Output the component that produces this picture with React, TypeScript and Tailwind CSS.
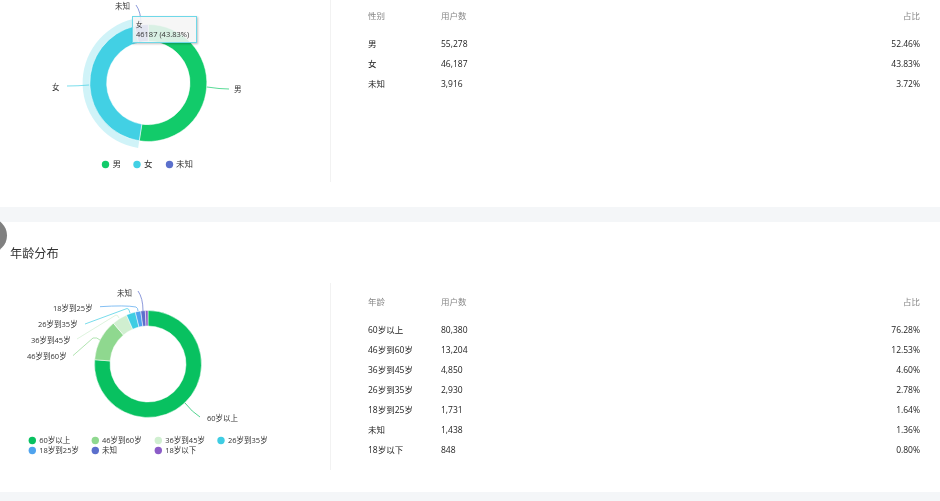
const FONT = "font-['Open_Sans','Noto_Sans_CJK_SC',sans-serif]";

function pt(cx: number, cy: number, r: number, deg: number): [number, number] {
  const a = ((deg - 90) * Math.PI) / 180;
  return [cx + r * Math.cos(a), cy + r * Math.sin(a)];
}
function arc(cx: number, cy: number, r0: number, r1: number, a0: number, a1: number) {
  const [x0, y0] = pt(cx, cy, r1, a0);
  const [x1, y1] = pt(cx, cy, r1, a1);
  const [x2, y2] = pt(cx, cy, r0, a1);
  const [x3, y3] = pt(cx, cy, r0, a0);
  const large = a1 - a0 > 180 ? 1 : 0;
  return `M${x0} ${y0}A${r1} ${r1} 0 ${large} 1 ${x1} ${y1}L${x2} ${y2}A${r0} ${r0} 0 ${large} 0 ${x3} ${y3}Z`;
}

type Seg = { c: string; a0: number; a1: number };
function Donut({ cx, cy, r0, r1, segs }: { cx: number; cy: number; r0: number; r1: number; segs: Seg[] }) {
  return (
    <>
      {segs.map((s, i) => (
        <path key={i} d={arc(cx, cy, r0, r1, s.a0, s.a1)} fill={s.c} stroke="#fff" strokeWidth={0.5} />
      ))}
    </>
  );
}

function Label({ x, y, t }: { x: number; y: number; t: string }) {
  return (
    <text x={x} y={y} fontSize={7.5} fill="#333" dominantBaseline="middle">
      {t}
    </text>
  );
}
function Lead({ d, c }: { d: string; c: string }) {
  return <path d={d} fill="none" stroke={c} strokeWidth={0.7} />;
}
function Dot({ x, y, c, t, tx, fs = 7.5 }: { x: number; y: number; c: string; t: string; tx: number; fs?: number }) {
  return (
    <>
      <circle cx={x} cy={y} r={3.7} fill={c} />
      <text x={tx} y={y} fontSize={fs} fill="#333" dominantBaseline="middle">
        {t}
      </text>
    </>
  );
}

function Stats({ head, rows, top }: { head: string; rows: [string, string, string][]; top: string }) {
  return (
    <div className={`flex-1 pl-[37px] pr-[20px] text-[8.5px] text-[#222] ${top}`}>
      <div className="grid h-[20px] grid-cols-[73px_1fr_auto] items-center text-[#888]">
        <span>{head}</span>
        <span>用户数</span>
        <span>占比</span>
      </div>
      <div className="mt-[8px]">
        {rows.map((r) => (
          <div key={r[0]} className="grid h-[20px] grid-cols-[73px_1fr_auto] items-center">
            <span>{r[0]}</span>
            <span>{r[1]}</span>
            <span>{r[2]}</span>
          </div>
        ))}
      </div>
    </div>
  );
}

export default function App() {
  return (
    <div className={`relative h-[501px] w-[940px] overflow-hidden bg-white blur-[0.25px] ${FONT}`}>
      <section className="relative flex h-[207px] items-start">
        <div className="h-[182px] w-[331px] border-r border-[#f2f2f2]">
          <svg width={330} height={182} viewBox="0 0 330 182">
            <path d={arc(148.3, 83, 58.3, 65.7, 188.9, 346.6)} fill="#42d0e4" opacity={0.25} />
            <Donut
              cx={148.3}
              cy={83}
              r0={41.7}
              r1={58.5}
              segs={[
                { c: "#12cb6a", a0: 0, a1: 188.9 },
                { c: "#42d0e4", a0: 188.9, a1: 346.6 },
                { c: "#5b70cc", a0: 346.6, a1: 360 },
              ]}
            />
            <Lead d="M207 87Q220 89 229 89" c="#12cb6a" />
            <Lead d="M89 85Q78 86 67 86" c="#42d0e4" />
            <Lead d="M141 24Q141 12 136 5" c="#5b70cc" />
            <Label x={234} y={90} t="男" />
            <Label x={52} y={88} t="女" />
            <Label x={115} y={7} t="未知" />
            <Dot x={105.5} y={164.5} c="#12cb6a" t="男" tx={112.5} fs={8.5} />
            <Dot x={137} y={164.5} c="#42d0e4" t="女" tx={144} fs={8.5} />
            <Dot x={169.5} y={164.5} c="#5b70cc" t="未知" tx={176} fs={8.5} />
          </svg>
        </div>
        <Stats
          top="pt-[6px]"
          head="性别"
          rows={[
            ["男", "55,278", "52.46%"],
            ["女", "46,187", "43.83%"],
            ["未知", "3,916", "3.72%"],
          ]}
        />
        <div className="absolute left-[132px] top-[16px] flex h-[27px] w-[65px] flex-col border border-[#6fd8e8] bg-[#f5f5f5e0] pl-[3px] pt-[4px] text-[7.5px] text-[#333] shadow-[1px_1px_2px_rgba(0,0,0,0.25)]">
          <div className="text-[6.5px] leading-[8px]">女</div>
          <div className="whitespace-nowrap leading-[10px]">46187 (43.83%)</div>
        </div>
      </section>
      <div className="h-[15px] bg-[#f4f6f8]" />
      <section className="h-[270px]">
        <h2 className="h-[61px] pl-[10px] pt-[22px] text-[12.2px] font-normal leading-[20px] text-[#333]">年龄分布</h2>
        <div className="flex items-start">
          <div className="h-[187px] w-[331px] border-r border-[#f2f2f2]">
            <svg width={330} height={187} viewBox="0 283 330 187">
              <Donut
                cx={148}
                cy={364}
                r0={38}
                r1={53.5}
                segs={[
                  { c: "#08c160", a0: 0, a1: 274.6 },
                  { c: "#8fd88f", a0: 274.6, a1: 319.7 },
                  { c: "#d0efd0", a0: 319.7, a1: 336.3 },
                  { c: "#3fcde3", a0: 336.3, a1: 346.3 },
                  { c: "#4fa3ee", a0: 346.3, a1: 352.2 },
                  { c: "#5b6fcc", a0: 352.2, a1: 357.1 },
                  { c: "#8b5cc7", a0: 357.1, a1: 360 },
                ]}
              />
              <Lead d="M143 311Q143 298 138 291" c="#5b6fcc" />
              <Lead d="M100 306.7Q125 305 136 307Q138 308 138 311" c="#4fa3ee" />
              <Lead d="M85 324L127 308.5Q129 308 130 313" c="#3fcde3" />
              <Lead d="M77 339L116 315Q118 315 119 318" c="#d0efd0" />
              <Lead d="M73 355.6L93 338Q97 337 100 340" c="#8fd88f" />
              <Lead d="M185 403Q192 412 200 417" c="#08c160" />
              <Label x={117} y={293.5} t="未知" />
              <Label x={53} y={309} t="18岁到25岁" />
              <Label x={38} y={325} t="26岁到35岁" />
              <Label x={31} y={341} t="36岁到45岁" />
              <Label x={27} y={357} t="46岁到60岁" />
              <Label x={207} y={419} t="60岁以上" />
              <Dot x={32.3} y={440.5} c="#08c160" t="60岁以上" tx={39.3} />
              <Dot x={95.3} y={440.5} c="#8fd88f" t="46岁到60岁" tx={102} />
              <Dot x={158.3} y={440.5} c="#d0efd0" t="36岁到45岁" tx={165.3} />
              <Dot x={221} y={440.5} c="#3fcde3" t="26岁到35岁" tx={228} />
              <Dot x={32.3} y={450.5} c="#4fa3ee" t="18岁到25岁" tx={39.3} />
              <Dot x={95.3} y={450.5} c="#5b6fcc" t="未知" tx={102} />
              <Dot x={158.3} y={450.5} c="#8b5cc7" t="18岁以下" tx={165.3} />
            </svg>
          </div>
          <Stats
            top="pt-[9px]"
            head="年龄"
            rows={[
              ["60岁以上", "80,380", "76.28%"],
              ["46岁到60岁", "13,204", "12.53%"],
              ["36岁到45岁", "4,850", "4.60%"],
              ["26岁到35岁", "2,930", "2.78%"],
              ["18岁到25岁", "1,731", "1.64%"],
              ["未知", "1,438", "1.36%"],
              ["18岁以下", "848", "0.80%"],
            ]}
          />
        </div>
      </section>
      <div className="h-[9px] bg-[#f4f6f8]" />
      <div className="absolute left-[-28px] top-[218px] h-[35px] w-[35px] rounded-full bg-[#808080]" />
    </div>
  );
}
